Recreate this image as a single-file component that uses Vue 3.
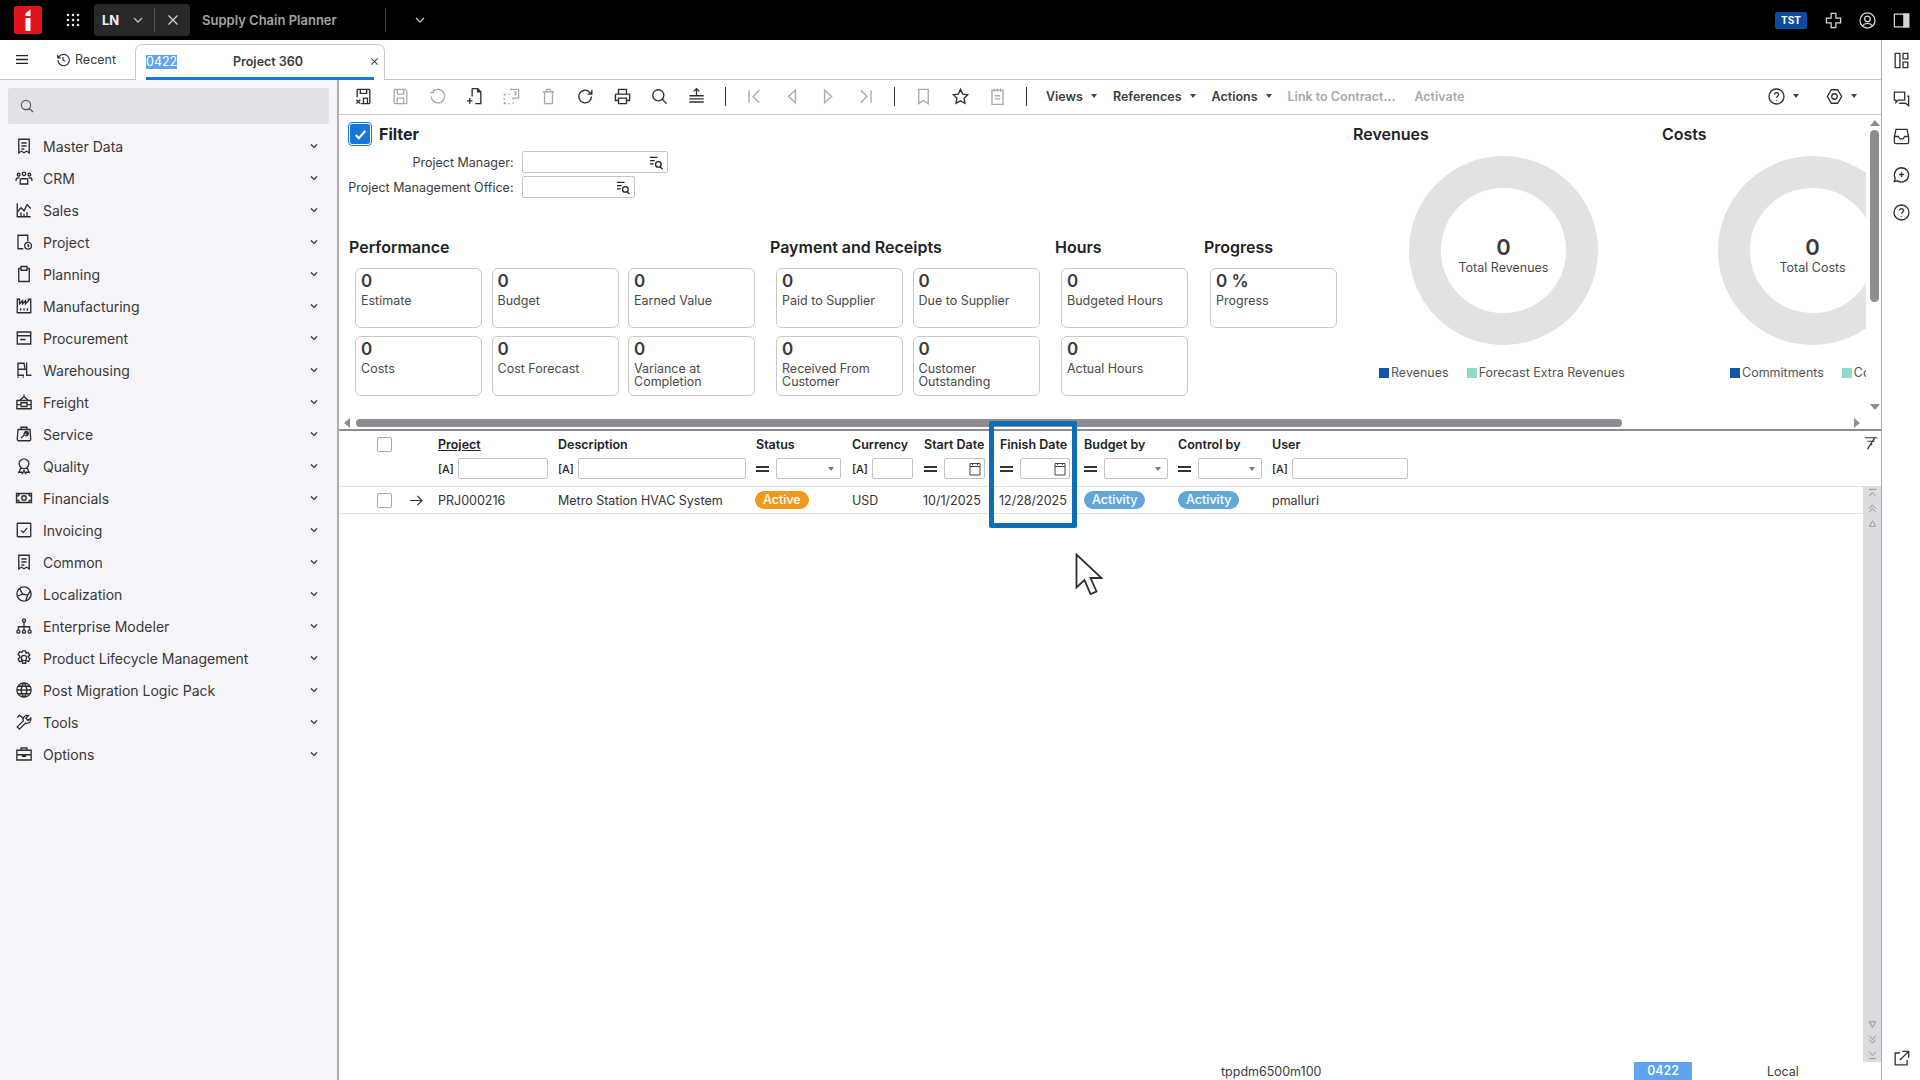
<template>
  <div class="app">
    <header class="topbar">
      <svg class="logo" viewBox="0 0 28 28">
        <rect width="28" height="28" rx="3" fill="#e1141c" />
        <path d="M11.5 12h5v13h-5z M16.5 3.500v6.500h-5V7.500z" fill="#fff" />
      </svg>
      <svg class="grid-dots" viewBox="0 0 14 14">
        <path :d="dots" />
      </svg>
      <div class="app-pill">
        <span class="app-name">LN</span>
        <svg class="ic-chev" viewBox="0 0 12 12"><path d="M2 4l4 4 4-4" /></svg>
        <i class="pill-div"></i>
        <svg class="ic-x" viewBox="0 0 12 12"><path d="M1.500 1.500l9 9 M10.500 1.500l-9 9" /></svg>
      </div>
      <span class="app-title">Supply Chain Planner</span>
      <i class="top-div"></i>
      <svg class="ic-chev top-chev" viewBox="0 0 12 12"><path d="M2 4l4 4 4-4" /></svg>
      <span class="tst">TST</span>
      <svg class="top-ic" viewBox="0 0 24 24"><path :d="icons.plus" /></svg>
      <svg class="top-ic" viewBox="0 0 24 24"><path :d="icons.user" /></svg>
      <svg class="top-ic" viewBox="0 0 24 24"><path :d="icons.panel" /><path class="solid" d="M15 4h6v16h-6z" /></svg>
    </header>

    <div class="body">
      <div class="workspace">
        <div class="tabrow">
          <svg class="burger" viewBox="0 0 14 12"><path d="M0 1.500h14 M0 6h14 M0 10.500h14" /></svg>
          <svg class="ic-recent" viewBox="0 0 24 24"><path :d="icons.recent" /></svg>
          <span class="recent">Recent</span>
          <div class="tab">
            <span class="tab-code">0422</span>
            <span class="tab-title">Project 360</span>
            <svg class="tab-x" viewBox="0 0 10 10"><path d="M1.500 1.500l7 7 M8.500 1.500l-7 7" /></svg>
            <i class="tab-line"></i>
          </div>
        </div>

        <div class="work">
          <aside class="sidebar">
            <div class="search">
              <svg viewBox="0 0 24 24"><path :d="icons.search" /></svg>
            </div>
            <nav class="menu">
              <div v-for="m in menu" :key="m.label" class="menu-item">
                <svg class="menu-ic" viewBox="0 0 24 24"><path :d="icons[m.icon]" /></svg>
                <span class="menu-label">{{ m.label }}</span>
                <svg class="menu-chev" viewBox="0 0 10 10"><path d="M2 3.500l3 3 3-3" /></svg>
              </div>
            </nav>
          </aside>

          <main class="content">
            <div class="toolbar">
              <template v-for="(t, i) in tools" :key="i">
                <i v-if="t.sep" class="tool-sep"></i>
                <svg v-else class="tool" :class="{ off: t.off }" viewBox="0 0 24 24"><path :d="icons[t.icon]" /></svg>
              </template>
              <span class="tb-menu">Views<i class="caret"></i></span>
              <span class="tb-menu">References<i class="caret"></i></span>
              <span class="tb-menu">Actions<i class="caret"></i></span>
              <span class="tb-text off">Link to Contract...</span>
              <span class="tb-text off">Activate</span>
              <svg class="tool tb-help" viewBox="0 0 24 24"><path :d="icons.help" /></svg><i class="caret dark"></i>
              <svg class="tool tb-gear" viewBox="0 0 24 24"><path :d="icons.hex" /></svg><i class="caret dark"></i>
            </div>

            <section class="upper">
              <div class="upper-row">
                <div class="upper-main">
                  <div class="left">
                    <div class="filter">
                      <div class="filter-head">
                        <span class="check-on">
                          <svg viewBox="0 0 14 14"><path d="M2.500 7.500l3 3 6-7" /></svg>
                        </span>
                        <span class="filter-title">Filter</span>
                      </div>
                      <div class="form-row">
                        <label>Project Manager:</label>
                        <span class="lookup wide"><svg viewBox="0 0 16 16"><path :d="lookup" /></svg></span>
                      </div>
                      <div class="form-row">
                        <label>Project Management Office:</label>
                        <span class="lookup"><svg viewBox="0 0 16 16"><path :d="lookup" /></svg></span>
                      </div>
                    </div>
                    <div class="kpis">
                      <div v-for="g in groups" :key="g.title" class="group" :style="{ width: g.width + 'px' }">
                        <h3>{{ g.title }}</h3>
                        <div class="cards" :style="{ gridTemplateColumns: `repeat(${g.cols}, 127px)` }">
                          <div v-for="c in g.cards" :key="c.label" class="card">
                            <b>{{ c.value || '0' }}</b>
                            <span>{{ c.label }}</span>
                          </div>
                        </div>
                      </div>
                    </div>
                  </div>

                  <div v-for="c in charts" :key="c.title" class="chart" :style="{ width: c.width + 'px' }">
                    <h3>{{ c.title }}</h3>
                    <div class="donut">
                      <b>0</b>
                      <span>{{ c.total }}</span>
                    </div>
                    <div class="legend" :style="{ paddingLeft: c.legendPad + 'px' }">
                      <span><i class="sq navy"></i>{{ c.a }}</span>
                      <span><i class="sq mint"></i>{{ c.b }}</span>
                    </div>
                  </div>
                </div>
                <div class="vscroll">
                  <i class="tri up"></i>
                  <i class="vthumb"></i>
                  <i class="tri down"></i>
                </div>
              </div>
              <div class="hscroll">
                <i class="tri left-t"></i>
                <i class="hthumb"></i>
                <i class="tri right-t"></i>
              </div>
            </section>

            <section class="table">
              <div class="row head">
                <span class="box"></span>
                <span class="th under">Project</span>
                <span class="th">Description</span>
                <span class="th">Status</span>
                <span class="th">Currency</span>
                <span class="th">Start Date</span>
                <span class="th">Finish Date</span>
                <span class="th">Budget by</span>
                <span class="th">Control by</span>
                <span class="th">User</span>
                <svg class="filter-off" viewBox="0 0 16 16"><path d="M1 2h14 M4 6h8 M6.500 10h3 M12.500 1.500L4 15" /></svg>
              </div>
              <div class="row filters">
                <span></span>
                <span v-for="f in filters" :key="f.key" class="fcell">
                  <span class="prefix">
                    <template v-if="f.kind === 'text'">[A]</template>
                    <i v-else class="eq"></i>
                  </span>
                  <span class="finput" :style="{ width: f.width + 'px' }">
                    <i v-if="f.type === 'select'" class="caret sel"></i>
                    <svg v-if="f.type === 'date'" class="cal" viewBox="0 0 12 14"><path d="M1 1.500h10v11.500H1z M1 4.500h10 M3.500 1v2 M8.500 1v2" /></svg>
                  </span>
                </span>
              </div>
              <div class="table-body">
                <div class="rows">
                  <div class="row data">
                    <span class="sel-cell">
                      <span class="box"></span>
                      <svg class="arrow" viewBox="0 0 14 12"><path d="M0 6h13 M8 1l5 5-5 5" /></svg>
                    </span>
                    <span>PRJ000216</span>
                    <span>Metro Station HVAC System</span>
                    <span class="status-cell"><em class="pill orange">Active</em></span>
                    <span>USD</span>
                    <span class="date">10/1/2025</span>
                    <span class="date">12/28/2025</span>
                    <span><em class="pill blue">Activity</em></span>
                    <span><em class="pill blue">Activity</em></span>
                    <span>pmalluri</span>
                  </div>
                </div>
                <div class="side-scroll">
                  <div class="side-group">
                    <svg viewBox="0 0 12 12"><path d="M2 1.500h8 M2.500 9L6 5l3.500 4" /></svg>
                    <svg viewBox="0 0 12 12"><path d="M2.500 6L6 2l3.500 4 M2.500 10L6 6l3.500 4" /></svg>
                    <svg viewBox="0 0 12 12"><path d="M6 3l3.500 6h-7z" /></svg>
                  </div>
                  <div class="side-group">
                    <svg viewBox="0 0 12 12"><path d="M6 9L2.500 3h7z" /></svg>
                    <svg viewBox="0 0 12 12"><path d="M2.500 2L6 6l3.500-4 M2.500 6L6 10l3.500-4" /></svg>
                    <svg viewBox="0 0 12 12"><path d="M2 10.500h8 M2.500 3L6 7l3.500-4" /></svg>
                  </div>
                </div>
              </div>
              <div class="statusbar">
                <span class="st-session">tppdm6500m100</span>
                <span class="st-company">0422</span>
                <span class="st-local">Local</span>
              </div>

              <!-- callout drawn over the recording -->
              <i class="highlight"></i>
              <svg class="cursor" viewBox="0 0 28 44">
                <path d="M1.500 1.500v33l8-7.500 6 14 6-2.500-6-13.500h11z" />
              </svg>
            </section>
          </main>
        </div>
      </div>

      <aside class="rail">
        <svg class="rail-ic" viewBox="0 0 24 24"><path :d="icons.layout" /></svg>
        <svg class="rail-ic" viewBox="0 0 24 24"><path :d="icons.chat" /></svg>
        <svg class="rail-ic" viewBox="0 0 24 24"><path :d="icons.inbox" /></svg>
        <svg class="rail-ic" viewBox="0 0 24 24"><path :d="icons.spark" /></svg>
        <svg class="rail-ic" viewBox="0 0 24 24"><path :d="icons.help" /></svg>
        <svg class="rail-ic rail-out" viewBox="0 0 24 24"><path :d="icons.external" /></svg>
      </aside>
    </div>
  </div>
</template>

<script setup>
const dots = 'M2 2h.01 M7 2h.01 M12 2h.01 M2 7h.01 M7 7h.01 M12 7h.01 M2 12h.01 M7 12h.01 M12 12h.01'
const lookup = 'M1 2.500h8 M1 6h5 M1 9.500h4 M7 10a3 3 0 1 0 6 0a3 3 0 1 0-6 0 M11.500 12.500L14.500 15'

const circle = (cx, cy, r) => `M${cx - r} ${cy}a${r} ${r} 0 1 0 ${r * 2} 0a${r} ${r} 0 1 0-${r * 2} 0`

const icons = {
  plus: 'M9 3h6v6h6v6h-6v6H9v-6H3V9h6z',
  user: circle(12, 12, 9.5) + ' ' + circle(12, 10, 3.5) + ' M6 18.500c1.500-2.500 3.500-3 6-3s4.500 .5 6 3',
  panel: 'M3 4h18v16H3z',
  recent: 'M4.500 12a8.500 8.500 0 1 0 2.500-6L4 9 M4 4v5h5 M12 7.500V12l3 2',
  search: circle(10.5, 10.5, 7) + ' M15.500 15.500L21 21',
  receipt: 'M5 3h14v18l-3.500-2-3.500 2-3.500-2-3.500 2z M8.500 8h7 M8.500 12h7 M8.500 16h4',
  crm: circle(12, 6.500, 2.300) + ' ' + circle(4.800, 7.500, 1.800) + ' ' + circle(19.200, 7.500, 1.800) + ' M7 20v-5a2 2 0 0 1 2-2h6a2 2 0 0 1 2 2v5z M1.500 16v-2a2 2 0 0 1 2-2H6 M22.500 16v-2a2 2 0 0 0-2-2H18',
  sales: 'M3 3v18h18 M3 15l5-6 4 4 4-8 5 5 M8 21v-6 M12 21v-4 M16 21v-6',
  project: 'M11 21H4V3h13v8 M13 17a4.500 4.500 0 1 0 9 0a4.500 4.500 0 1 0-9 0 M17.500 14.800v2.400l1.500 1',
  planning: 'M8 4.500H5V22h14V4.500h-3 M8 2h8v5H8z',
  factory: 'M3 3h3v6l4-4v4l4-4v4l4-4V3h3v18H3z M7.500 15v3 M12 15v3 M16.500 15v3',
  procurement: 'M3 4h18v16H3z M3 9h18 M7 14h7',
  forklift: 'M4 3h8l1.500 8H4z M4 11v7 M15.500 2v17H22 M3 19h9 M3 21.500h2 M10 21.500h2',
  freight: 'M12 2v3 M6 10l6-5 6 5 M2.500 10h19v11h-19z M2.500 15.500H8 M16 15.500h5.500 M8 13h8v5H8z',
  service: 'M8 6V3h8v3 M4 6h16l1 13a2 2 0 0 1-2 2H5a2 2 0 0 1-2-2z M8 17.500l4.500-4.500a3 3 0 0 1 4-4l-2 2 1 1 2-2a3 3 0 0 1-4 4',
  quality: circle(12, 9, 6.500) + ' M8 14.500L5 20.500l3.200-.5L10 22l2-4 2 4 1.800-2 3.200 .5-3-6',
  money: 'M2 6h20v12H2z ' + circle(12, 12, 3) + ' M5.500 6a3 3 0 0 1-3.500 3.500 M18.500 6a3 3 0 0 0 3.500 3.500 M5.500 18A3 3 0 0 0 2 14.500 M18.500 18a3 3 0 0 1 3.500-3.500',
  invoice: 'M4 3h16a1 1 0 0 1 1 1v16a1 1 0 0 1-1 1H4a1 1 0 0 1-1-1V4a1 1 0 0 1 1-1z M8 12.500l3 3 5-6',
  locale: circle(12, 12, 9.500) + ' M6 4.500L10 12l-7 3 M10 12l7 1.500L14 21.500 M17 13.500l3.500-6',
  tree: circle(12, 4.500, 2) + ' ' + circle(4.500, 19.500, 2) + ' ' + circle(12, 19.500, 2) + ' ' + circle(19.500, 19.500, 2) + ' M12 6.500v11 M4.500 17.500V13h15v4.500',
  gear: 'M10 2.500h4l.8 3 2.900-.9 2 3.500-2.200 2.200 .9 1.200 1.600 1.500-2 3.500-3-.9-.9 3.400h-4l-.9-3-3 .9-2-3.500 2.200-2.200-.2-1.900-2-2 2-3.500 3 .9z ' + circle(12, 12, 3.500),
  globe: circle(12, 12, 9.500) + ' M2.500 12h19 M12 2.500c-5 5-5 14 0 19 M12 2.500c5 5 5 14 0 19 M4 7h16 M4 17h16',
  tools: 'M21 6.500l-3.500 3.500-3-3L18 3.500a5.500 5.500 0 0 0-7 7l-8 8 3 3 8-8a5.500 5.500 0 0 0 7-7z M3 6l3-3 6 5',
  case: 'M2.500 7h19v13h-19z M8 7V4h8v3 M2.500 13h19 M10 13v2h4v-2',
  saveX: 'M9 21h10a1 1 0 0 0 1-1V4l-1-1H5a1 1 0 0 0-1 1v9 M8 3v5h8V3 M12 21v-7h5v7 M3 16l5 5 M8 16l-5 5',
  save: 'M5 3h13l2 2v15a1 1 0 0 1-1 1H5a1 1 0 0 1-1-1V4a1 1 0 0 1 1-1z M8 3v6h8V3 M8 21v-7h8v7',
  undo: 'M6.500 5.500A8.500 8.500 0 1 1 4 12 M7 3v4H3',
  newDoc: 'M9 2h7l4 4v15h-7 M16 2v4h4 M9 2v10 M6 14v7 M2.500 17.500H9.500',
  dup: 'M10 3h11v11h-6 M15 9v0 M3 9h2 M8 9h2 M3 9v2 M3 14v2 M3 19v2h2 M8 21h2 M14 21v-2 M14 13v3 M15 6.500h2.500v3h-2',
  trash: 'M7 6h10v15H7z M5 6h14 M9.500 6V3h5v3',
  redo: 'M19.500 12a8 8 0 1 1-2.500-5.800L20 9 M20 3.500V9h-5.500',
  print: 'M7 9V3h10v6 M3 9h18v8h-4 M7 17H3V9 M7 14h10v7H7z',
  tree2: 'M12 2v9 M8.500 5.500L12 2l3.500 3.500 M3 11h18 M3 15h18 M3 19h18',
  first: 'M5 4v16 M18 4l-8 8 8 8',
  prev: 'M17 4L8 12l9 8z',
  next: 'M7 4l9 8-9 8z',
  last: 'M19 4v16 M6 4l8 8-8 8',
  bookmark: 'M6 3h12v18l-6-4-6 4z',
  star: 'M12 3l2.800 5.900 6.200 .8-4.500 4.400 1.100 6.400L12 17.500l-5.600 3 1.100-6.400L3 9.700l6.200-.8z',
  note: 'M5 4h14v18H5z M8 2v4 M12 2v4 M16 2v4 M8.500 11h7 M8.500 15h7',
  help: circle(12, 12, 9.500) + ' M9.500 9.500a2.500 2.500 0 1 1 3.800 2.200c-.8 .5-1.300 1-1.300 2 M12 16.500v1',
  hex: 'M8 3.500h8l5 8.500-5 8.500H8L3 12z ' + circle(12, 12, 3.500),
  layout: 'M4 3h6v18H4z M14 3h6v7h-6z M14 14h6v7h-6z',
  chat: 'M3 4h13v10H8l-3 3v-3H3z M9 18h8l4 3V9h-2',
  inbox: 'M5 3h14l2 9v7a2 2 0 0 1-2 2H5a2 2 0 0 1-2-2v-7z M3 12h5l2 3h4l2-3h5',
  spark: 'M12 3.500a9 9 0 1 1-5 16.500l-4 1 1-4.500a9 9 0 0 1 8-13z M12 9v6 M9 12h6 M21 3h.01',
  external: 'M10 5H4v15h15v-6 M13 3h8v8 M21 3L10 14'
}

const menu = [
  { label: 'Master Data', icon: 'receipt' },
  { label: 'CRM', icon: 'crm' },
  { label: 'Sales', icon: 'sales' },
  { label: 'Project', icon: 'project' },
  { label: 'Planning', icon: 'planning' },
  { label: 'Manufacturing', icon: 'factory' },
  { label: 'Procurement', icon: 'procurement' },
  { label: 'Warehousing', icon: 'forklift' },
  { label: 'Freight', icon: 'freight' },
  { label: 'Service', icon: 'service' },
  { label: 'Quality', icon: 'quality' },
  { label: 'Financials', icon: 'money' },
  { label: 'Invoicing', icon: 'invoice' },
  { label: 'Common', icon: 'receipt' },
  { label: 'Localization', icon: 'locale' },
  { label: 'Enterprise Modeler', icon: 'tree' },
  { label: 'Product Lifecycle Management', icon: 'gear' },
  { label: 'Post Migration Logic Pack', icon: 'globe' },
  { label: 'Tools', icon: 'tools' },
  { label: 'Options', icon: 'case' }
]

const tools = [
  { icon: 'saveX' },
  { icon: 'save', off: true },
  { icon: 'undo', off: true },
  { icon: 'newDoc' },
  { icon: 'dup', off: true },
  { icon: 'trash', off: true },
  { icon: 'redo' },
  { icon: 'print' },
  { icon: 'search' },
  { icon: 'tree2' },
  { sep: true },
  { icon: 'first', off: true },
  { icon: 'prev', off: true },
  { icon: 'next', off: true },
  { icon: 'last', off: true },
  { sep: true },
  { icon: 'bookmark', off: true },
  { icon: 'star' },
  { icon: 'note', off: true },
  { sep: true }
]

const groups = [
  {
    title: 'Performance', width: 421, cols: 3,
    cards: [
      { label: 'Estimate' }, { label: 'Budget' }, { label: 'Earned Value' },
      { label: 'Costs' }, { label: 'Cost Forecast' }, { label: 'Variance at Completion' }
    ]
  },
  {
    title: 'Payment and Receipts', width: 285, cols: 2,
    cards: [
      { label: 'Paid to Supplier' }, { label: 'Due to Supplier' },
      { label: 'Received From Customer' }, { label: 'Customer Outstanding' }
    ]
  },
  {
    title: 'Hours', width: 149, cols: 1,
    cards: [{ label: 'Budgeted Hours' }, { label: 'Actual Hours' }]
  },
  {
    title: 'Progress', width: 141, cols: 1,
    cards: [{ label: 'Progress', value: '0 %' }]
  }
]

const charts = [
  { title: 'Revenues', total: 'Total Revenues', a: 'Revenues', b: 'Forecast Extra Revenues', width: 309, legendPad: 26 },
  { title: 'Costs', total: 'Total Costs', a: 'Commitments', b: 'Cost Forecast', width: 212, legendPad: 68 }
]

const filters = [
  { key: 'project', kind: 'text', width: 90 },
  { key: 'desc', kind: 'text', width: 168 },
  { key: 'status', kind: 'eq', width: 65, type: 'select' },
  { key: 'currency', kind: 'text', width: 41 },
  { key: 'start', kind: 'eq', width: 41, type: 'date' },
  { key: 'finish', kind: 'eq', width: 50, type: 'date' },
  { key: 'budget', kind: 'eq', width: 64, type: 'select' },
  { key: 'control', kind: 'eq', width: 64, type: 'select' },
  { key: 'user', kind: 'text', width: 116 }
]
</script>

<style>
html, body {
  margin: 0;
  background: #fff;
  overflow: hidden;
}
</style>

<style scoped>
.app {
  width: 1920px;
  height: 1080px;
  display: flex;
  flex-direction: column;
  font-family: Inter, "Noto Sans", sans-serif;
  font-size: 12.5px;
  color: #333;
  overflow: hidden;
}

svg {
  fill: none;
  stroke: currentColor;
  stroke-width: 1.7;
  flex: none;
}

i {
  display: block;
  flex: none;
}

/* top bar */
.topbar {
  height: 40px;
  background: #000;
  display: flex;
  align-items: center;
  padding-left: 14px;
  color: #e8e8e8;
  flex: none;
}

.logo {
  width: 28px;
  height: 28px;
  stroke: none;
}

.grid-dots {
  width: 14px;
  height: 14px;
  margin-left: 24px;
  stroke-width: 2.6;
  stroke-linecap: round;
}

.app-pill {
  width: 96px;
  height: 32px;
  margin-left: 14px;
  background: #29292b;
  border-radius: 4px;
  display: flex;
  align-items: center;
  padding-left: 8px;
  box-sizing: border-box;
}

.app-name {
  font-size: 13px;
  font-weight: 700;
  color: #f0f0f0;
  width: 30px;
}

.ic-chev {
  width: 12px;
  height: 12px;
  color: #bdbdbd;
  stroke-width: 1.3;
}

.pill-div {
  width: 1px;
  height: 24px;
  background: #58585a;
  margin-left: 10px;
}

.ic-x {
  width: 12px;
  height: 12px;
  margin-left: 12px;
  color: #cfcfcf;
  stroke-width: 1.3;
}

.app-title {
  margin-left: 12px;
  width: 183px;
  font-size: 13px;
  font-weight: 600;
  color: #a3a3a3;
}

.top-div {
  width: 1px;
  height: 24px;
  background: #3e3e3e;
}

.top-chev {
  margin-left: 28px;
}

.tst {
  margin-left: auto;
  width: 32px;
  height: 17px;
  line-height: 17px;
  text-align: center;
  background: #0e4a9e;
  border-radius: 2px;
  color: #fff;
  font-size: 10px;
  font-weight: 700;
}

.top-ic {
  width: 19px;
  height: 19px;
  margin-left: 15px;
  color: #d6d6d6;
  stroke-width: 1.6;
}

.topbar .tst + .top-ic {
  margin-left: 17px;
}

.top-ic:last-child {
  margin-right: 9px;
}

.top-ic .solid {
  fill: #d6d6d6;
}

/* main body */
.body {
  flex: 1;
  display: flex;
  min-height: 0;
}

.workspace {
  width: 1881px;
  display: flex;
  flex-direction: column;
}

.tabrow {
  height: 40px;
  box-sizing: border-box;
  border-bottom: 1px solid #c9c9c9;
  display: flex;
  align-items: center;
  padding-left: 16px;
  flex: none;
}

.burger {
  width: 12px;
  height: 11px;
  color: #222;
  stroke-width: 1.5;
}

.ic-recent {
  width: 16px;
  height: 16px;
  margin-left: 27px;
  color: #2f2f2f;
}

.recent {
  margin-left: 4px;
  width: 60px;
  font-size: 12.500px;
  color: #3b3b3b;
}

.tab {
  position: relative;
  align-self: flex-end;
  width: 250px;
  height: 36px;
  box-sizing: border-box;
  border: 1px solid #c9c9c9;
  border-bottom: none;
  border-radius: 7px 7px 0 0;
  background: #fff;
  display: flex;
  align-items: center;
  margin-bottom: -1px;
  padding-left: 10px;
  padding-bottom: 2px;
}

.tab-code {
  width: 31px;
  height: 14px;
  line-height: 14px;
  text-align: center;
  background: #62a5ee;
  color: #fff;
  font-size: 12.500px;
}

.tab-title {
  margin-left: 56px;
  font-weight: 600;
  color: #3a3a3a;
  font-size: 12.500px;
  width: 137px;
}

.tab-x {
  width: 9px;
  height: 9px;
  color: #4a4a4a;
  stroke-width: 1.2;
}

.tab-line {
  position: absolute;
  left: 10px;
  right: 10px;
  bottom: 0;
  height: 3px;
  background: #1a75d8;
}

.work {
  flex: 1;
  display: flex;
  min-height: 0;
}

/* sidebar */
.sidebar {
  width: 339px;
  box-sizing: border-box;
  background: #f6f4f9;
  border-right: 2px solid #aeaeb2;
  padding: 8px 8px 0;
  flex: none;
}

.search {
  width: 321px;
  height: 36px;
  background: #e3e1e5;
  border-radius: 3px;
  display: flex;
  align-items: center;
  padding-left: 11px;
  box-sizing: border-box;
  color: #555;
  margin-bottom: 6px;
}

.search svg {
  width: 16px;
  height: 16px;
}

.menu-item {
  height: 32px;
  display: flex;
  align-items: center;
  margin-left: 7px;
  width: 304px;
  font-size: 14px;
  color: #383838;
}

.menu-ic {
  width: 18px;
  height: 18px;
  color: #2e2e2e;
  stroke-width: 1.8;
}

.menu-label {
  margin-left: 10px;
  flex: 1;
}

.menu-chev {
  width: 10px;
  height: 10px;
  color: #333;
  stroke-width: 1.2;
}

/* toolbar */
.content {
  flex: 1;
  min-width: 0;
  display: flex;
  flex-direction: column;
}

.toolbar {
  height: 35px;
  box-sizing: border-box;
  border-bottom: 1px solid #c9c9c9;
  display: flex;
  align-items: center;
  padding-left: 15px;
  flex: none;
  padding-bottom: 2px;
}

.tool {
  width: 19px;
  height: 19px;
  margin-right: 18px;
  color: #2f2f2f;
  stroke-width: 1.7;
}

.tool.off {
  color: #a9a9a9;
}

.tool-sep {
  width: 1px;
  height: 19px;
  background: #333;
  margin: 0 19px 0 1px;
}

.tb-menu,
.tb-text {
  font-weight: 600;
  font-size: 12.500px;
  color: #3c3c3c;
  display: flex;
  align-items: center;
}

.tb-menu:nth-of-type(1) {
  margin-left: 0;
}

.tb-menu {
  margin-right: 16px;
}

.tb-menu .caret {
  margin-left: 8px;
}

.tb-text.off {
  color: #a9a9a9;
  margin-right: 19px;
}

.caret {
  width: 0;
  height: 0;
  border-left: 3.500px solid transparent;
  border-right: 3.500px solid transparent;
  border-top: 4px solid #444;
}

.caret.dark {
  margin-left: -7px;
}

.tb-help {
  margin-left: auto;
  margin-right: 14px;
}

.tb-gear {
  margin-left: 26px;
  margin-right: 14px;
}

.toolbar > .caret:last-child {
  margin-right: 24px;
}

/* upper panel */
.upper {
  height: 314px;
  display: flex;
  flex-direction: column;
  flex: none;
}

.upper-row {
  flex: 1;
  display: flex;
  min-height: 0;
}

.upper-main {
  width: 1527px;
  display: flex;
  overflow: hidden;
  flex: none;
}

.left {
  width: 1006px;
  padding-left: 10px;
  box-sizing: border-box;
  flex: none;
}

.filter {
  height: 120px;
  padding-top: 8px;
  box-sizing: border-box;
}

.filter-head {
  display: flex;
  align-items: center;
  height: 22px;
  margin-bottom: 6px;
}

.check-on {
  width: 20px;
  height: 20px;
  background: #1a75d8;
  border-radius: 2px;
  outline: 1px solid #1a75d8;
  outline-offset: 1px;
  margin-left: 1px;
  display: flex;
  align-items: center;
  justify-content: center;
  color: #fff;
}

.check-on svg {
  width: 15px;
  height: 15px;
  stroke-width: 1.800;
}

.filter-title {
  margin-left: 9px;
  font-size: 16px;
  font-weight: 700;
  color: #222;
}

.form-row {
  display: flex;
  align-items: center;
  height: 22px;
  margin-bottom: 3px;
  margin-left: -10px;
}

.form-row label {
  width: 174.500px;
  text-align: right;
  font-size: 12.500px;
  color: #3c3c3c;
  margin-right: 8.500px;
  white-space: nowrap;
  flex: none;
}

.lookup {
  width: 113px;
  height: 22px;
  box-sizing: border-box;
  border: 1px solid #c4c4c4;
  border-radius: 2px;
  display: flex;
  align-items: center;
  justify-content: flex-end;
  padding-right: 3px;
}

.lookup.wide {
  width: 146px;
  padding-right: 3px;
}

.lookup svg {
  width: 15px;
  height: 15px;
  color: #222;
  stroke-width: 1.400;
}

.kpis {
  display: flex;
}

.group {
  flex: none;
}

.group h3,
.chart h3 {
  margin: 0;
  height: 24px;
  line-height: 24px;
  font-size: 16px;
  font-weight: 600;
  color: #222;
}

.cards {
  display: grid;
  gap: 8px 9.500px;
  margin-top: 9px;
  padding-left: 6px;
}

.card {
  height: 60px;
  box-sizing: border-box;
  border: 1px solid #c9c9c9;
  border-radius: 6px;
  padding: 2px 5px 0;
  display: flex;
  flex-direction: column;
  background: #fff;
}

.card b {
  font-size: 17px;
  line-height: 20px;
  font-weight: 600;
  color: #3a3a3a;
}

.card span {
  margin-top: 1px;
  font-size: 12.500px;
  line-height: 13px;
  color: #4a4a4a;
  padding-top: 2px;
}

.chart {
  flex: none;
  padding: 7px 0 0 8px;
  box-sizing: border-box;
}

.donut {
  width: 189px;
  height: 189px;
  box-sizing: border-box;
  border: 32px solid #e2e1e4;
  border-radius: 50%;
  margin: 10px 0 0 56px;
  display: flex;
  flex-direction: column;
  align-items: center;
  padding-top: 46px;
  white-space: nowrap;
}

.donut b {
  font-size: 22px;
  line-height: 26px;
  font-weight: 600;
  color: #3a3a3a;
}

.donut span {
  font-size: 12.500px;
  line-height: 16px;
  color: #4a4a4a;
}

.legend {
  display: flex;
  gap: 18px;
  margin-top: 20px;
  font-size: 12.500px;
  line-height: 16px;
  color: #555;
  white-space: nowrap;
}

.legend span {
  display: flex;
  align-items: center;
  gap: 2px;
}

.sq {
  width: 10px;
  height: 10px;
}

.navy {
  background: #0f55a8;
}

.mint {
  background: #8edcc8;
}

.vscroll {
  width: 13px;
  margin-left: 2px;
  display: flex;
  flex-direction: column;
  align-items: center;
  padding: 5px 0 6px;
  box-sizing: border-box;
}

.vthumb {
  width: 9px;
  height: 172px;
  margin-top: 4px;
  background: #8e8c91;
  border-radius: 5px;
}

.tri {
  width: 0;
  height: 0;
}

.tri.up {
  border-left: 5px solid transparent;
  border-right: 5px solid transparent;
  border-bottom: 6px solid #8e8c91;
}

.tri.down {
  margin-top: auto;
  border-left: 5px solid transparent;
  border-right: 5px solid transparent;
  border-top: 6px solid #8e8c91;
}

.hscroll {
  height: 13px;
  display: flex;
  align-items: center;
  flex: none;
  padding-left: 5px;
  padding-right: 21px;
}

.hthumb {
  width: 1266px;
  height: 8px;
  margin-left: 6px;
  background: #8e8c91;
  border-radius: 4px;
}

.tri.left-t {
  border-top: 5px solid transparent;
  border-bottom: 5px solid transparent;
  border-right: 6px solid #8e8c91;
}

.tri.right-t {
  margin-left: auto;
  border-top: 5px solid transparent;
  border-bottom: 5px solid transparent;
  border-left: 6px solid #8e8c91;
}

/* table */
.table {
  position: relative;
  flex: 1;
  display: flex;
  flex-direction: column;
  min-height: 0;
  border-top: 2px solid #8e8c91;
}

.row {
  display: grid;
  grid-template-columns: 61px 120px 198px 96px 72px 76px 84px 94px 94px 1fr;
  padding-left: 38px;
  align-items: center;
}

.row.head {
  position: relative;
  height: 25px;
  padding-top: 2px;
  box-sizing: border-box;
}

.box {
  display: block;
  width: 15px;
  height: 15px;
  box-sizing: border-box;
  border: 1px solid #a9a9a9;
  border-radius: 2px;
  background: #fff;
}

.th {
  font-weight: 600;
  font-size: 12.500px;
  color: #222;
  white-space: nowrap;
}

.th.under {
  text-decoration: underline;
}

.filter-off {
  position: absolute;
  top: 5px;
  right: 3px;
  width: 14px;
  height: 14px;
  color: #333;
  stroke-width: 1.400;
}

.row.filters {
  height: 30px;
  padding-bottom: 5px;
  box-sizing: border-box;
}

.fcell {
  display: flex;
  align-items: center;
}

.prefix {
  width: 20px;
  flex: none;
  font-size: 11px;
  font-weight: 500;
  color: #222;
  white-space: nowrap;
}

.eq {
  width: 13px;
  height: 6px;
  box-sizing: border-box;
  border-top: 2px solid #333;
  border-bottom: 2px solid #333;
}

.finput {
  height: 21px;
  box-sizing: border-box;
  border: 1px solid #c4c4c4;
  border-radius: 2px;
  display: flex;
  align-items: center;
  justify-content: flex-end;
  padding-right: 6px;
  background: #fff;
}

.caret.sel {
  border-top-color: #777;
}

.cal {
  width: 12px;
  height: 14px;
  color: #444;
  stroke-width: 1;
  margin-right: -3px;
}

.table-body {
  flex: 1;
  display: flex;
  min-height: 0;
}

.rows {
  flex: 1;
}

.row.data {
  height: 28px;
  border-top: 1px solid #e2e2e4;
  border-bottom: 1px solid #e2e2e4;
  box-sizing: border-box;
  font-size: 12.500px;
  color: #333;
  white-space: nowrap;
}

.sel-cell {
  display: flex;
  align-items: center;
}

.arrow {
  width: 13px;
  height: 11px;
  margin-left: 18px;
  color: #333;
  stroke-width: 1.300;
}

.status-cell {
  margin-left: -1px;
}

.date {
  margin-left: -1px;
}

.pill {
  display: inline-block;
  height: 18px;
  line-height: 18px;
  padding: 0 8px;
  border-radius: 9px;
  font-style: normal;
  font-size: 12.500px;
  font-weight: 500;
  color: #fff;
}

.orange {
  background: #ef9a1a;
}

.blue {
  background: #62a8d6;
}

.side-scroll {
  width: 18px;
  background: #dcdbdf;
  display: flex;
  flex-direction: column;
  justify-content: space-between;
  align-items: center;
  padding: 2px 0;
  box-sizing: border-box;
  flex: none;
}

.side-group {
  display: flex;
  flex-direction: column;
  gap: 4px;
}

.side-group svg {
  width: 11px;
  height: 11px;
  display: block;
  color: #8d8d8d;
  stroke-width: 1;
}

.statusbar {
  height: 18px;
  display: flex;
  align-items: center;
  flex: none;
  font-size: 12.500px;
  color: #3c3c3c;
  position: relative;
}

.st-session {
  margin-left: 882px;
  width: 413px;
}

.st-company {
  width: 58px;
  height: 18px;
  line-height: 18px;
  text-align: center;
  background: #5fa4ee;
  color: #fff;
  font-weight: 500;
}

.st-local {
  margin-left: 75px;
}

.highlight {
  position: absolute;
  left: 650px;
  top: -10px;
  width: 88px;
  height: 107px;
  box-sizing: border-box;
  border: 5px solid #0e6eb5;
  border-radius: 2px;
}

.cursor {
  position: absolute;
  left: 736px;
  top: 122px;
  width: 28px;
  height: 44px;
  stroke: #2f2f2f;
  stroke-width: 1.800;
  fill: #fff;
}

/* right rail */
.rail {
  width: 39px;
  border-left: 1px solid #aeaeb2;
  box-sizing: border-box;
  display: flex;
  flex-direction: column;
  align-items: center;
  padding-top: 11px;
  gap: 19px;
  flex: none;
}

.rail-ic {
  width: 19px;
  height: 19px;
  color: #333;
  stroke-width: 1.700;
}

.rail-out {
  margin-top: auto;
  margin-bottom: 12px;
}
</style>
